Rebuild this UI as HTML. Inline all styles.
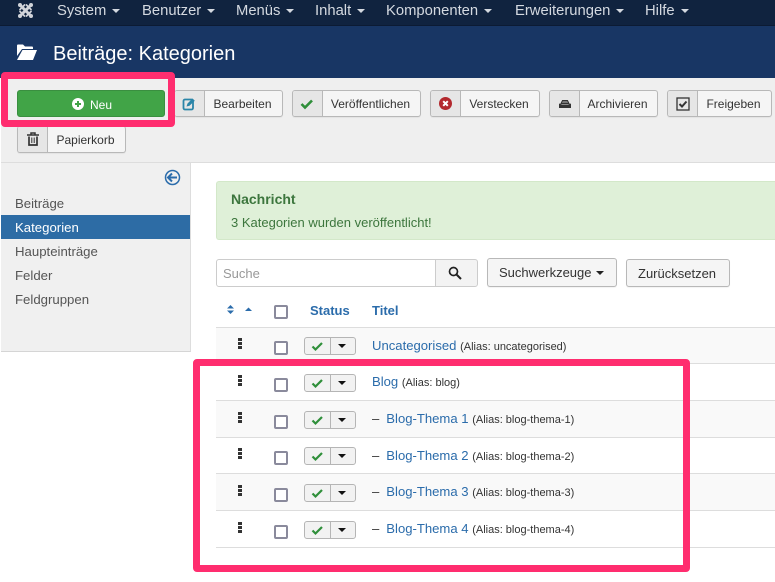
<!DOCTYPE html>
<html><head><meta charset="utf-8"><style>
html,body{margin:0;padding:0;background:#fff}
#p{position:relative;width:775px;height:582px;overflow:hidden;background:#fff;font-family:"Liberation Sans",sans-serif;font-size:12.5px;color:#333}
#p>*,.a{position:absolute}
.t{white-space:nowrap;line-height:16px}
.n{color:#d4d9e0;font-size:14.8px;top:3px}
.car{display:inline-block;width:0;height:0;border:4px solid transparent;border-top-color:#d4d9e0;border-bottom:0;margin-left:6px;vertical-align:2px}
.b{box-sizing:border-box;height:27px;border:1px solid #b8b8b8;border-radius:3px;background:#f5f5f5;overflow:hidden;box-shadow:0 1px 1px rgba(0,0,0,.05)}
.b i{position:absolute;left:0;top:0;width:29px;height:25px;background:#e6e6e6;border-right:1px solid #b8b8b8}
.b span{position:absolute;top:5px;left:28px;right:0;text-align:center;font-size:12px;line-height:16px;color:#333;white-space:nowrap}
.b svg{position:absolute;left:6px;top:4px}
.s{left:15px;font-size:13.2px;color:#555;line-height:16px}
.row{left:216px;width:559px;border-bottom:1px solid #ddd;box-sizing:content-box}
.cb{box-sizing:border-box;width:14px;height:14px;border:2px solid #8a8a9c;border-radius:2px;background:#fff;left:274px}
.st{left:304px;width:52px;height:18px;box-sizing:border-box;border:1px solid #b5b5b5;border-radius:3px;background:#f2f2f2}
.st:before{content:"";position:absolute;left:25px;top:0;bottom:0;width:1px;background:#b5b5b5}
.st:after{content:"";position:absolute;left:33px;top:6px;border:4.5px solid transparent;border-top-color:#111;border-bottom:0}
.st svg{position:absolute;left:6px;top:3px}
.dr{left:238px;width:4px;height:3px;background:#333;box-shadow:0 4px 0 #333,0 8px 0 #333}
.l{color:#2b6cab;font-size:13.1px;line-height:16px;white-space:nowrap}
.l small{color:#333;font-size:11px}
.l em{font-style:normal;color:#333;margin-right:7px}
.pk{border:7px solid #ff2d6f;border-radius:4px;box-sizing:border-box;background:transparent}
</style></head><body><div id="p">
<div style="left:0;top:0;width:775px;height:26px;background:#10233f;border-bottom:1px solid #0c1b33;box-sizing:border-box"></div>
<div style="left:0;top:26px;width:775px;height:52px;background:#183664"></div>
<div style="left:1px;top:78px;width:774px;height:84px;background:#efefef;border-bottom:1px solid #ddd"></div>

<svg style="left:17px;top:2px" width="17" height="17" viewBox="0 0 17 17"><g stroke="#d0d3d9" fill="none" stroke-linecap="round"><path d="M4.500 4.500L12.500 12.500M12.500 4.500L4.500 12.500" stroke-width="3"/><path d="M3 7.500L7.500 3M9.500 3L14 7.500M14 9.500L9.500 14M7.500 14L3 9.500" stroke-width="1.800"/></g><g fill="#d0d3d9"><circle cx="3" cy="3" r="2"/><circle cx="14" cy="3" r="2"/><circle cx="3" cy="14" r="2"/><circle cx="14" cy="14" r="2"/></g></svg>
<div class="t n" style="left:57px">System<b class="car"></b></div>
<div class="t n" style="left:142px">Benutzer<b class="car"></b></div>
<div class="t n" style="left:236px">Menüs<b class="car"></b></div>
<div class="t n" style="left:315px">Inhalt<b class="car"></b></div>
<div class="t n" style="left:386px">Komponenten<b class="car"></b></div>
<div class="t n" style="left:515px">Erweiterungen<b class="car"></b></div>
<div class="t n" style="left:645px">Hilfe<b class="car"></b></div>

<svg style="left:17px;top:44px" width="20" height="17" viewBox="0 0 20 17"><path d="M0 1.500Q0 0.500 1 0.500H6L8 2.500H15Q16 2.500 16 3.500V5H5L0 12Z" fill="#fff"/><path d="M5.500 6H20L16 16H0Z" fill="#fff"/></svg>
<div class="t" style="left:53px;top:43px;font-size:20px;line-height:22px;color:#fff">Beiträge: Kategorien</div>

<div style="left:17px;top:90px;width:148px;height:27px;background:#41a447;border:1px solid #3a8f40;box-sizing:border-box;border-radius:3px"></div>
<svg style="left:72px;top:98px" width="12" height="12" viewBox="0 0 12 12"><circle cx="6" cy="6" r="6" fill="#fff"/><path d="M6 3V9M3 6H9" stroke="#41a447" stroke-width="2"/></svg>
<div class="t" style="left:90px;top:97px;font-size:12px;color:#fff">Neu</div>

<div class="b" style="left:174px;top:90px;width:109px"><i></i><svg width="14" height="16" viewBox="0 0 14 16" style="left:7px;top:5px"><rect x="1.500" y="3.500" width="9.500" height="10" rx="1.500" fill="none" stroke="#2a85a8" stroke-width="1.800"/><path d="M4.500 10.500L5.500 7.500L10.500 2.500L12.800 4.800L7.500 9.800Z" fill="#2a85a8"/></svg><span>Bearbeiten</span></div>
<div class="b" style="left:292px;top:90px;width:129px"><i></i><svg width="14" height="16" viewBox="0 0 14 16" style="left:7px;top:5px"><path d="M1.500 8L5 11.500L12 4.500" fill="none" stroke="#2f8f3a" stroke-width="2.600"/></svg><span>Veröffentlichen</span></div>
<div class="b" style="left:430px;top:90px;width:110px"><i></i><svg width="14" height="14" viewBox="0 0 14 14" style="left:8px;top:6px"><circle cx="6.500" cy="6.500" r="6.500" fill="#b3292e"/><path d="M4.200 4.200L8.800 8.800M8.800 4.200L4.200 8.800" stroke="#fff" stroke-width="2"/></svg><span>Verstecken</span></div>
<div class="b" style="left:549px;top:90px;width:109px"><i></i><svg width="14" height="14" viewBox="0 0 14 14" style="left:8px;top:6px"><path d="M3 6.500L4.500 3.500H9.500L11 6.500Z" fill="#777" stroke="#333" stroke-width="1"/><path d="M1 6.500L4 7.500H10L13 6.500V11H1Z" fill="#333"/></svg><span>Archivieren</span></div>
<div class="b" style="left:667px;top:90px;width:105px"><i></i><svg width="14" height="14" viewBox="0 0 14 14" style="left:8px;top:6px"><rect x="1" y="1" width="12" height="12" fill="none" stroke="#333" stroke-width="1.300"/><path d="M3.500 7L6 9.500L10.500 4.500" fill="none" stroke="#333" stroke-width="2"/></svg><span>Freigeben</span></div>
<div class="b" style="left:17px;top:126px;width:109px;border-top-color:transparent"><i style="height:25px"></i><svg width="14" height="14" viewBox="0 0 14 14" style="left:8px;top:5px"><path d="M1 3H13M5 3V1H9V3" fill="none" stroke="#333" stroke-width="1.500"/><path d="M3 4.500V13H11V4.500" fill="none" stroke="#333" stroke-width="1.700"/><path d="M5.800 5.500V11M8.200 5.500V11" stroke="#333"/></svg><span>Papierkorb</span></div>

<div style="left:1px;top:163px;width:189px;height:188px;background:#f0f0f0;border-right:1px solid #ddd;border-bottom:1px solid #d5d5d5"></div>
<svg style="left:164px;top:169px" width="17" height="17" viewBox="0 0 17 17"><circle cx="8.500" cy="8.500" r="7" fill="none" stroke="#2b6cab" stroke-width="1.500"/><path d="M8 4.500L4 8.500L8 12.500M4.500 8.500H13" fill="none" stroke="#2b6cab" stroke-width="2"/></svg>
<div class="t s" style="top:196px">Beiträge</div>
<div style="left:1px;top:215px;width:189px;height:24px;background:#2d6ca5"></div>
<div class="t s" style="top:220px;color:#fff">Kategorien</div>
<div class="t s" style="top:244px">Haupteinträge</div>
<div class="t s" style="top:268px">Felder</div>
<div class="t s" style="top:292px">Feldgruppen</div>

<div style="left:216px;top:181px;width:559px;height:59px;background:#dff0d8;border:1px solid #d3e8c9;border-right:0;border-radius:3px 0 0 3px;box-sizing:border-box"></div>
<div class="t" style="left:231px;top:191px;font-size:14px;font-weight:bold;color:#3c763d">Nachricht</div>
<div class="t" style="left:231px;top:215px;font-size:13px;color:#3c763d">3 Kategorien wurden veröffentlicht!</div>

<div style="left:216px;top:259px;width:220px;height:28px;box-sizing:border-box;border:1px solid #ccc;border-radius:3px 0 0 3px;background:#fff"></div>
<div class="t" style="left:223px;top:266px;font-size:13px;color:#999">Suche</div>
<div style="left:435px;top:259px;width:43px;height:28px;box-sizing:border-box;border:1px solid #ccc;border-radius:0 3px 3px 0;background:#f3f3f3"></div>
<svg style="left:448px;top:266px" width="14" height="14" viewBox="0 0 14 14"><circle cx="5.500" cy="5.500" r="4" fill="none" stroke="#222" stroke-width="1.700"/><path d="M8.500 8.500L13 13" stroke="#222" stroke-width="2"/></svg>
<div class="b" style="left:487px;top:258px;width:130px;height:29px"></div>
<div class="t" style="left:499px;top:265px;font-size:13px;color:#333">Suchwerkzeuge<b class="car" style="border-top-color:#222;margin-left:4px"></b></div>
<div class="b" style="left:626px;top:259px;width:104px;height:28px"></div>
<div class="t" style="left:638px;top:266px;font-size:13px;color:#333">Zurücksetzen</div>

<svg style="left:226px;top:304px" width="26" height="12" viewBox="0 0 26 12"><path d="M1 4.500L4.500 1L8 4.500ZM1 6.500H8L4.500 10Z" fill="#2b6cab"/><path d="M19 7L22.500 3.500L26 7Z" fill="#2b6cab"/></svg>
<div class="cb a" style="top:305px"></div>
<div class="t" style="left:310px;top:303px;font-size:13px;font-weight:bold;color:#2b6cab">Status</div>
<div class="t" style="left:372px;top:303px;font-size:13px;font-weight:bold;color:#2b6cab">Titel</div>

<div style="left:216px;top:327px;width:559px;height:1px;background:#ddd"></div>
<div class="row" style="top:328px;height:35px;background:#f9f9f9"></div>
<div class="row" style="top:364px;height:36px"></div>
<div class="row" style="top:401px;height:36px;background:#f9f9f9"></div>
<div class="row" style="top:438px;height:35px"></div>
<div class="row" style="top:474px;height:36px;background:#f9f9f9"></div>
<div class="row" style="top:511px;height:36px"></div>

<div class="dr" style="top:338px"></div><div class="cb" style="top:341px"></div><div class="st" style="top:337px"><svg width="13" height="11" viewBox="0 0 13 11"><path d="M1.500 5.500L4.500 8.500L11 2" fill="none" stroke="#2f8f3a" stroke-width="2.200"/></svg></div>
<div class="l" style="left:372px;top:338px">Uncategorised <small>(Alias: uncategorised)</small></div>

<div class="dr" style="top:375px"></div><div class="cb" style="top:378px"></div><div class="st" style="top:374px"><svg width="13" height="11" viewBox="0 0 13 11"><path d="M1.500 5.500L4.500 8.500L11 2" fill="none" stroke="#2f8f3a" stroke-width="2.200"/></svg></div>
<div class="l" style="left:372px;top:374px">Blog <small>(Alias: blog)</small></div>

<div class="dr" style="top:412px"></div><div class="cb" style="top:415px"></div><div class="st" style="top:411px"><svg width="13" height="11" viewBox="0 0 13 11"><path d="M1.500 5.500L4.500 8.500L11 2" fill="none" stroke="#2f8f3a" stroke-width="2.200"/></svg></div>
<div class="l" style="left:372px;top:411px"><em>–</em>Blog-Thema 1 <small>(Alias: blog-thema-1)</small></div>

<div class="dr" style="top:448px"></div><div class="cb" style="top:451px"></div><div class="st" style="top:447px"><svg width="13" height="11" viewBox="0 0 13 11"><path d="M1.500 5.500L4.500 8.500L11 2" fill="none" stroke="#2f8f3a" stroke-width="2.200"/></svg></div>
<div class="l" style="left:372px;top:448px"><em>–</em>Blog-Thema 2 <small>(Alias: blog-thema-2)</small></div>

<div class="dr" style="top:485px"></div><div class="cb" style="top:488px"></div><div class="st" style="top:484px"><svg width="13" height="11" viewBox="0 0 13 11"><path d="M1.500 5.500L4.500 8.500L11 2" fill="none" stroke="#2f8f3a" stroke-width="2.200"/></svg></div>
<div class="l" style="left:372px;top:484px"><em>–</em>Blog-Thema 3 <small>(Alias: blog-thema-3)</small></div>

<div class="dr" style="top:522px"></div><div class="cb" style="top:525px"></div><div class="st" style="top:521px"><svg width="13" height="11" viewBox="0 0 13 11"><path d="M1.500 5.500L4.500 8.500L11 2" fill="none" stroke="#2f8f3a" stroke-width="2.200"/></svg></div>
<div class="l" style="left:372px;top:521px"><em>–</em>Blog-Thema 4 <small>(Alias: blog-thema-4)</small></div>

<div class="pk" style="left:1px;top:72px;width:174px;height:55px"></div>
<div class="pk" style="left:193px;top:359px;width:497px;height:213px"></div>
</div></body></html>
